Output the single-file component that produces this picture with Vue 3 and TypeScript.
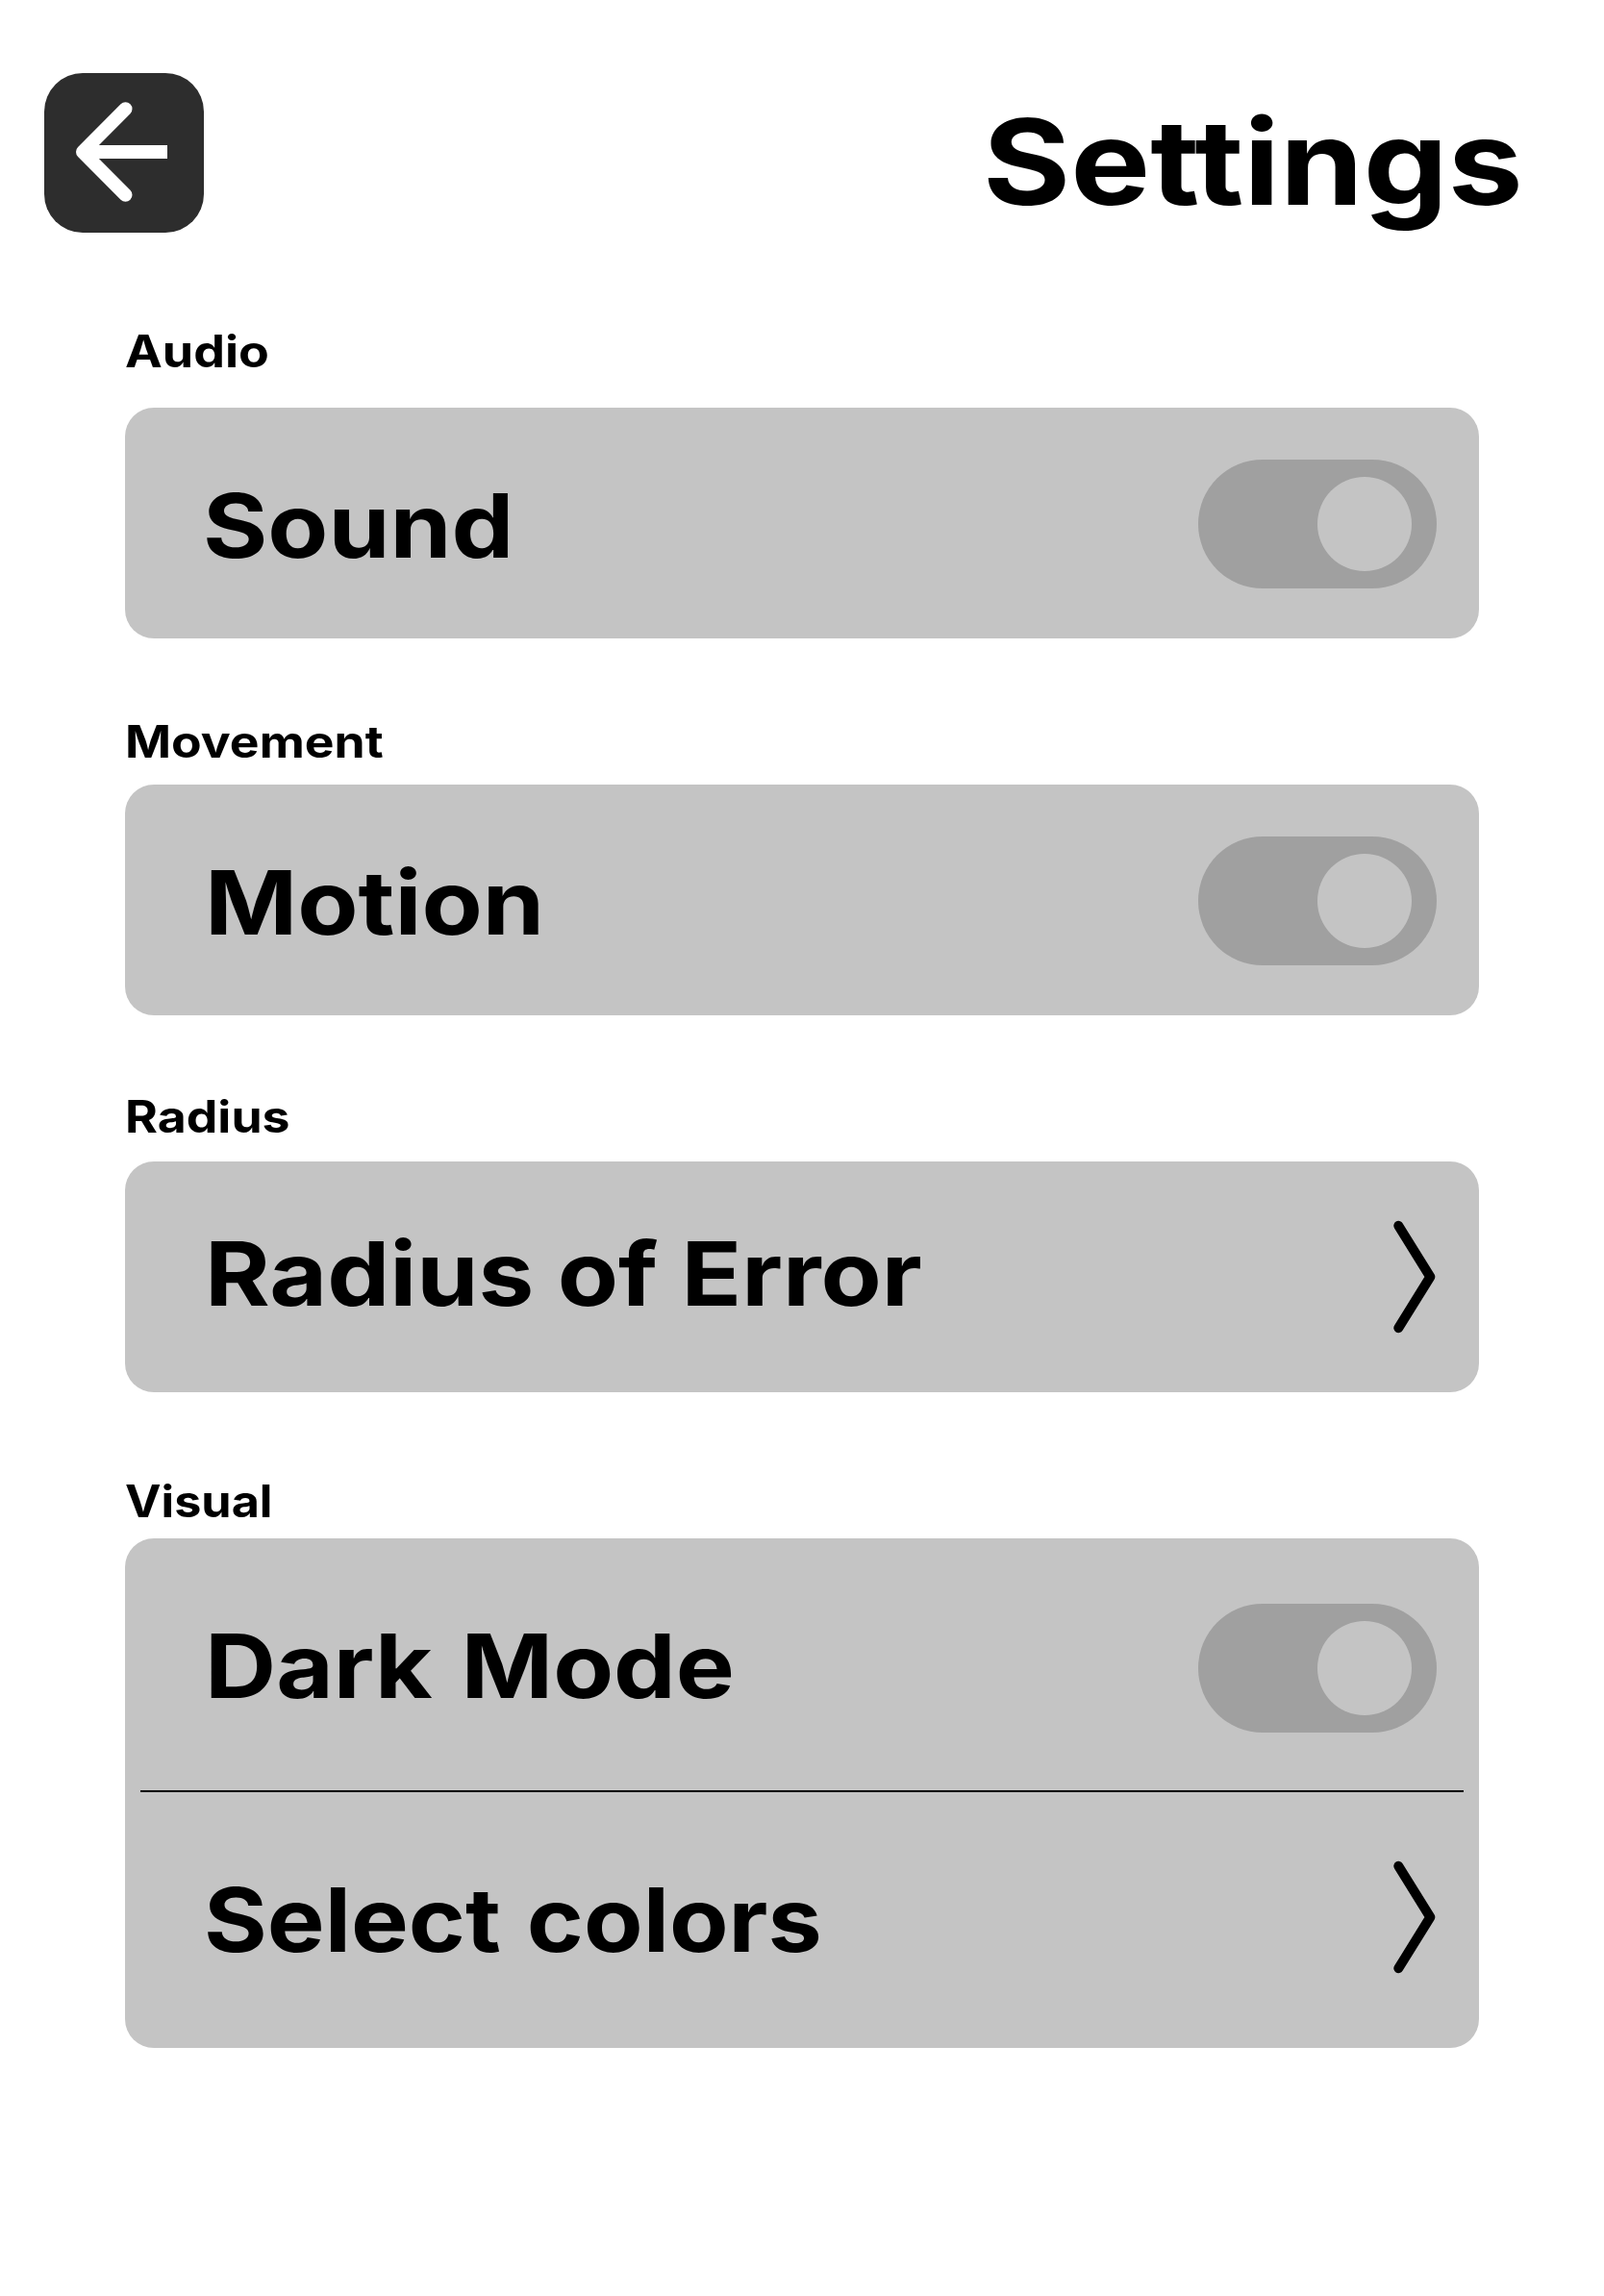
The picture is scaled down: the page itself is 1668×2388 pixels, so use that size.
<script setup lang="ts">
import { reactive } from 'vue'

interface Row {
  text: string
  kind: 'toggle' | 'link'
  stretch: number
  wordGap: number
  indent: number
  textTop: number
  controlTop: number
  height: number
}

interface Section {
  label: string
  stretch: number
  top: number
  gap: number
  rows: Row[]
}

const sections: Section[] = [
  {
    label: 'Audio', stretch: 1.125, top: 0, gap: 31,
    rows: [{ text: 'Sound', kind: 'toggle', stretch: 1.113, wordGap: 0, indent: 81.3, textTop: 66, controlTop: 54, height: 240 }],
  },
  {
    label: 'Movement', stretch: 1.118, top: 79, gap: 17,
    rows: [{ text: 'Motion', kind: 'toggle', stretch: 1.118, wordGap: 0, indent: 83.3, textTop: 66, controlTop: 54, height: 240 }],
  },
  {
    label: 'Radius', stretch: 1.12, top: 77, gap: 19,
    rows: [{ text: 'Radius of Error', kind: 'link', stretch: 1.117, wordGap: 0, indent: 83.3, textTop: 60, controlTop: 60, height: 240 }],
  },
  {
    label: 'Visual', stretch: 1.089, top: 85, gap: 11,
    rows: [
      { text: 'Dark Mode', kind: 'toggle', stretch: 1.111, wordGap: 5, indent: 83.3, textTop: 76, controlTop: 68, height: 262 },
      { text: 'Select colors', kind: 'link', stretch: 1.088, wordGap: 3, indent: 82, textTop: 76, controlTop: 70, height: 266 },
    ],
  },
]

const enabled = reactive<Record<string, boolean>>({ Sound: true, Motion: true, 'Dark Mode': true })
</script>

<template>
  <main class="page">
    <header class="header">
      <button class="back" type="button" aria-label="Back">
        <svg viewBox="0 0 166 166" width="166" height="166" fill="none" stroke="#fff" stroke-width="14">
          <path d="M84.5 37.3 L40 82 L84.5 126.7" stroke-linecap="round" stroke-linejoin="round" />
          <path d="M40 82 H128" />
        </svg>
      </button>
      <h1 class="title">Settings</h1>
    </header>

    <section v-for="s in sections" :key="s.label" class="section" :style="{ marginTop: s.top + 'px' }">
      <h2 class="label" :style="{ transform: `scaleX(${s.stretch})`, marginBottom: s.gap + 'px' }">{{ s.label }}</h2>
      <div class="card">
        <template v-for="(r, i) in s.rows" :key="r.text">
          <div v-if="i > 0" class="divider"></div>
          <div class="row" :style="{ height: r.height + 'px', paddingLeft: r.indent + 'px' }">
            <span
              class="text"
              :style="{ transform: `scaleX(${r.stretch})`, wordSpacing: r.wordGap + 'px', marginTop: r.textTop + 'px' }"
            >{{ r.text }}</span>
            <button
              v-if="r.kind === 'toggle'"
              class="toggle"
              :class="{ on: enabled[r.text] }"
              type="button"
              role="switch"
              :aria-checked="enabled[r.text]"
              :aria-label="r.text"
              :style="{ marginTop: r.controlTop + 'px' }"
              @click="enabled[r.text] = !enabled[r.text]"
            >
              <span class="knob"></span>
            </button>
            <svg
              v-else
              class="chevron"
              viewBox="0 0 48 120"
              width="48"
              height="120"
              :style="{ marginTop: r.controlTop + 'px' }"
            >
              <path d="M8.3 6.8 L41.3 60 L8.3 113.2" />
            </svg>
          </div>
        </template>
      </div>
    </section>
  </main>
</template>

<style>
body {
  background: #fff;
}
</style>

<style scoped>
.page {
  box-sizing: border-box;
  width: 1668px;
  height: 2388px;
  padding: 76px 130px 0;
  background: #fff;
  color: #000;
  font-family: Inter, 'Open Sans', sans-serif;
}

.header {
  display: flex;
  justify-content: space-between;
  align-items: flex-start;
  height: 261px;
  margin: 0 -46px 0 -84px;
}

.back {
  width: 166px;
  height: 166px;
  padding: 0;
  border: 0;
  border-radius: 40px;
  background: #2d2d2d;
}

.back svg {
  display: block;
}

.title {
  margin: 18px 0 0;
  font-size: 123.2px;
  font-weight: 700;
  line-height: 150px;
  white-space: nowrap;
  transform: scaleX(1.131);
  transform-origin: right;
}

.label {
  width: max-content;
  margin: 0;
  font-size: 46.2px;
  font-weight: 700;
  line-height: 56px;
  transform-origin: left;
}

.card {
  border-radius: 30px;
  background: #c4c4c4;
}

.row {
  box-sizing: border-box;
  display: flex;
  justify-content: space-between;
  align-items: flex-start;
  padding-right: 44px;
}

.text {
  font-size: 92.4px;
  font-weight: 700;
  line-height: 112px;
  white-space: nowrap;
  transform-origin: left;
}

.divider {
  height: 2px;
  margin: 0 16px;
  background: #000;
}

.toggle {
  box-sizing: border-box;
  display: flex;
  justify-content: flex-start;
  align-items: center;
  width: 248px;
  height: 134px;
  padding: 0 26px;
  border: 0;
  border-radius: 67px;
  background: #a0a0a0;
}

.toggle.on {
  justify-content: flex-end;
}

.knob {
  width: 98px;
  height: 98px;
  border-radius: 50%;
  background: #c4c4c4;
}

.chevron {
  fill: none;
  stroke: #000;
  stroke-width: 10;
  stroke-linecap: round;
  stroke-linejoin: round;
}
</style>
